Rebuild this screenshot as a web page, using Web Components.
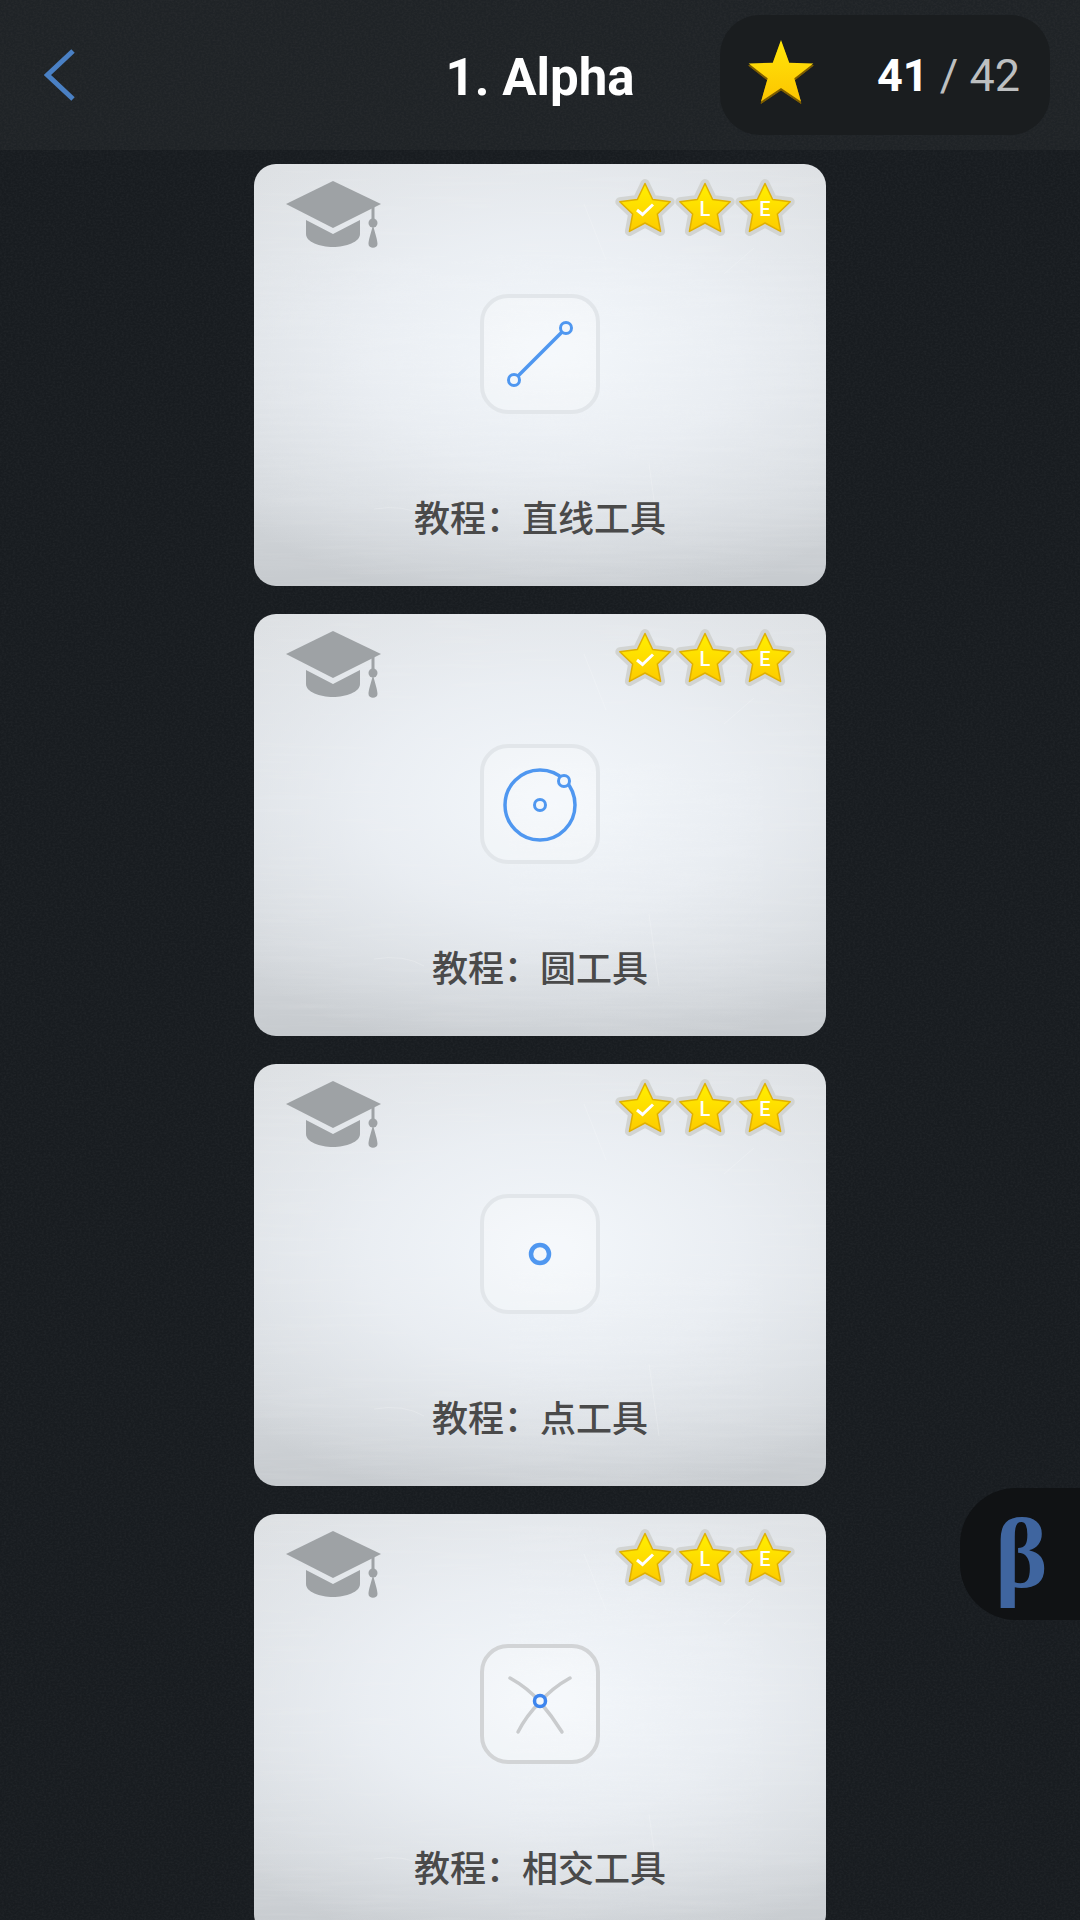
<!DOCTYPE html>
<html lang="zh">
<head>
<meta charset="utf-8">
<title>1. Alpha</title>
<style>
  html, body { margin: 0; padding: 0; background: #181c20; }
</style>
</head>
<body>
<euclid-screen>
  <level-header slot="header" title-text="1. Alpha" stars="41" total="42"></level-header>
  <tutorial-card tool="line">教程：直线工具</tutorial-card>
  <tutorial-card tool="circle">教程：圆工具</tutorial-card>
  <tutorial-card tool="point">教程：点工具</tutorial-card>
  <tutorial-card tool="intersect">教程：相交工具</tutorial-card>
</euclid-screen>

<script>
// Builds the points of a five pointed star around (cx, cy)
function starPoints(cx, cy, outer, inner) {
  const pts = [];
  for (let i = 0; i < 10; i++) {
    const r = i % 2 ? inner : outer;
    const a = -Math.PI / 2 + i * Math.PI / 5;
    pts.push((cx + r * Math.cos(a)).toFixed(2) + ',' + (cy + r * Math.sin(a)).toFixed(2));
  }
  return pts.join(' ');
}

/** Full screen: chalkboard background, header slot, list of cards, beta tab */
class EuclidScreen extends HTMLElement {
  constructor() {
    super();
    this.attachShadow({ mode: 'open' });
    this.shadowRoot.innerHTML = `
      <style>
        :host {
          display: block;
          position: relative;
          width: 1080px;
          height: 1920px;
          overflow: hidden;
          background: #181c20;
          font-family: Roboto, "Noto Sans CJK SC", sans-serif;
        }
        .grain {
          position: absolute;
          inset: 0;
          width: 100%;
          height: 100%;
          opacity: .05;
        }
        .list {
          position: relative;
          display: flex;
          flex-direction: column;
          align-items: center;
          gap: 28px;
          padding-top: 14px;
        }
      </style>
      <svg class="grain" aria-hidden="true">
        <filter id="chalk"><feTurbulence type="fractalNoise" baseFrequency=".45 .55" numOctaves="2" seed="4"/><feColorMatrix values="0 0 0 0 1  0 0 0 0 1  0 0 0 0 1  1.2 0 0 0 -.4"/></filter>
        <rect width="100%" height="100%" filter="url(#chalk)"/>
      </svg>
      <slot name="header"></slot>
      <div class="list"><slot></slot></div>
      <beta-tab></beta-tab>
    `;
  }
}

/** Top bar with back chevron, level title and star score */
class LevelHeader extends HTMLElement {
  constructor() {
    super();
    this.attachShadow({ mode: 'open' });
  }

  connectedCallback() {
    this.shadowRoot.innerHTML = `
      <style>
        :host {
          display: grid;
          grid-template-columns: 1fr auto 1fr;
          align-items: center;
          position: relative;
          height: 150px;
          background: rgba(255, 255, 255, .03);
          color: #fff;
        }
        .back { margin-left: 44px; display: block; }
        h1 {
          margin: 4px 0 0;
          font: 700 51px Roboto, sans-serif;
          color: #fff;
        }
        .score {
          justify-self: end;
          margin-right: 30px;
          box-sizing: border-box;
          width: 330px;
          height: 120px;
          padding: 0 30px 0 28px;
          display: flex;
          align-items: center;
          justify-content: space-between;
          background: #1a1d1f;
          border-radius: 40px;
        }
        .score svg { display: block; margin-top: -9px; }
        .count { font: 400 45px Roboto, sans-serif; color: #bdbfc0; white-space: nowrap; }
        .count b { font-weight: 700; color: #fff; }
      </style>
      <svg class="back" width="32" height="54" viewBox="0 0 32 54">
        <path d="M29 3 L3.5 27 L29 51" fill="none" stroke="#4a80c4" stroke-width="5"/>
      </svg>
      <h1>${this.getAttribute('title-text')}</h1>
      <div class="score">
        <svg width="66" height="68" viewBox="0 0 66 68">
          <defs>
            <linearGradient id="hs" x1="0" y1="0" x2="0" y2="1">
              <stop offset="0" stop-color="#ffe60a"/><stop offset="1" stop-color="#fcc400"/>
            </linearGradient>
          </defs>
          <polygon points="${starPoints(33, 37, 34, 14)}" transform="translate(0 2)" fill="#7f5e00" stroke="#7f5e00" stroke-width="1" stroke-linejoin="round"/>
          <polygon points="${starPoints(33, 37, 34, 14)}" fill="url(#hs)"/>
        </svg>
        <span class="count"><b>${this.getAttribute('stars')}</b> / ${this.getAttribute('total')}</span>
      </div>
    `;
  }
}

/** Small yellow star with a mark on it */
class StarBadge extends HTMLElement {
  constructor() {
    super();
    this.attachShadow({ mode: 'open' });
    const pts = starPoints(30, 32, 26.5, 13);
    this.shadowRoot.innerHTML = `
      <style>
        :host {
          display: block;
          position: relative;
          width: 60px;
          height: 60px;
        }
        svg { display: block; }
        .mark {
          position: absolute;
          left: 0;
          right: 0;
          top: 19px;
          text-align: center;
          font: 500 20px/24px Roboto, sans-serif;
          color: #fff;
        }
      </style>
      <svg width="60" height="60" viewBox="0 0 60 60">
        <defs>
          <linearGradient id="g" x1="0" y1="0" x2="0" y2="1">
            <stop offset="0" stop-color="#fff000"/><stop offset="1" stop-color="#fdcb00"/>
          </linearGradient>
        </defs>
        <polygon points="${pts}" fill="#d2d4d2" stroke="#d2d4d2" stroke-width="9" stroke-linejoin="round"/>
        <polygon points="${pts}" fill="url(#g)" stroke="#e0b000" stroke-width="1.5" stroke-linejoin="round"/>
      </svg>
      <div class="mark"><slot></slot></div>
    `;
  }
}

/** Rounded tile with the drawing of a geometry tool */
class ToolIcon extends HTMLElement {
  constructor() {
    super();
    this.attachShadow({ mode: 'open' });
  }

  connectedCallback() {
    const blue = 'fill="#f3f7fb" stroke="#4f97f0" stroke-width="3"';
    const drawings = {
      line: `<line x1="34" y1="86" x2="86" y2="34" stroke="#4f97f0" stroke-width="3.5"/>
             <circle cx="34" cy="86" r="5.5" ${blue}/><circle cx="86" cy="34" r="5.5" ${blue}/>`,
      circle: `<circle cx="60" cy="61" r="35" fill="none" stroke="#4f97f0" stroke-width="3.5"/>
               <circle cx="60" cy="61" r="5.5" ${blue}/><circle cx="84" cy="37" r="5.5" ${blue}/>`,
      point: `<circle cx="60" cy="60" r="9" fill="#f3f7fb" stroke="#4f97f0" stroke-width="4.5"/>`,
      intersect: `<g fill="none" stroke="#c9cbcd" stroke-width="3.5" stroke-linecap="round">
                    <path d="M30 34 Q48 44 60 58 Q72 44 90 34"/>
                    <path d="M38 88 Q46 72 60 58 Q72 72 82 88"/>
                  </g>
                  <circle cx="60" cy="57" r="5.5" fill="#f3f7fb" stroke="#3d85ee" stroke-width="3.5"/>`
    };
    const tool = this.getAttribute('tool');
    const border = tool === 'intersect' ? '#d2d4d6' : '#e2e6ea';
    this.shadowRoot.innerHTML = `
      <style>
        :host {
          display: block;
          box-sizing: border-box;
          width: 120px;
          height: 120px;
          border: 4px solid ${border};
          border-radius: 28px;
          background: rgba(255, 255, 255, .22);
        }
        svg { display: block; margin: -4px; }
      </style>
      <svg width="120" height="120" viewBox="0 0 120 120">${drawings[tool]}</svg>
    `;
  }
}

/** One tutorial in the level list */
class TutorialCard extends HTMLElement {
  constructor() {
    super();
    this.attachShadow({ mode: 'open' });
  }

  connectedCallback() {
    this.shadowRoot.innerHTML = `
      <style>
        :host {
          display: flex;
          flex-direction: column;
          align-items: center;
          position: relative;
          flex: none;
          box-sizing: border-box;
          width: 572px;
          height: 422px;
          padding-top: 14px;
          border-radius: 22px;
          background:
            radial-gradient(ellipse 72% 62% at 52% 44%, rgba(243, 247, 251, 1) 0%, rgba(238, 242, 247, .8) 45%, rgba(222, 226, 231, 0) 100%),
            linear-gradient(180deg, #dde0e3 0%, #d9dde1 45%, #d2d6da 80%, #c6cace 100%);
          overflow: hidden;
        }
        .grain {
          position: absolute;
          inset: 0;
          width: 100%;
          height: 100%;
          opacity: .1;
          pointer-events: none;
        }
        .scratch {
          position: absolute;
          inset: 0;
          width: 100%;
          height: 100%;
          pointer-events: none;
        }
        .top {
          position: relative;
          align-self: stretch;
          display: flex;
          justify-content: space-between;
          align-items: flex-start;
          padding: 0 31px 0 30px;
          height: 60px;
        }
        .stars { display: flex; }
        .cap { display: block; }
        tool-icon { margin-top: 56px; position: relative; }
        .name {
          position: relative;
          margin-top: 77px;
          font: 500 36px/50px "Noto Sans CJK SC", sans-serif;
          color: #4a4a4a;
          white-space: nowrap;
        }
        .check { display: block; margin: 3px auto 0; }
      </style>
      <svg class="grain" aria-hidden="true">
        <filter id="f"><feTurbulence type="fractalNoise" baseFrequency=".012 .22" numOctaves="3" seed="${this.getAttribute('tool').length}"/><feColorMatrix values="0 0 0 0 1  0 0 0 0 1  0 0 0 0 1  1.4 0 0 0 -.5"/></filter>
        <rect width="100%" height="100%" filter="url(#f)"/>
      </svg>
      <svg class="scratch" viewBox="0 0 572 422" aria-hidden="true" fill="none" stroke="#fff" stroke-opacity=".2" stroke-width="1">
        <path d="M330 40 L352 96"/>
        <path d="M395 300 L405 372"/>
        <path d="M470 110 L500 84"/>
        <path d="M120 345 Q150 340 170 352"/>
      </svg>
      <div class="top">
        <svg class="cap" width="100" height="76" viewBox="0 0 100 76" fill="#9ea2a5">
          <polygon points="2,26 49,3 97,26 49,50"/>
          <path d="M22 42 L49 56 L76 42 V56 C76 64 62 69 49 69 C36 69 22 64 22 56 Z"/>
          <rect x="87.5" y="26" width="3" height="18"/>
          <circle cx="89" cy="45" r="4.5"/>
          <path d="M89 47 C91 55 93.5 62 93.5 66 C93.5 71 84.5 71 84.5 66 C84.5 62 87 55 89 47 Z"/>
        </svg>
        <div class="stars">
          <star-badge><svg class="check" width="22" height="18" viewBox="0 0 22 18"><path d="M3 10 L8.5 14.5 L19 4.5" fill="none" stroke="#fff" stroke-width="3"/></svg></star-badge>
          <star-badge>L</star-badge>
          <star-badge>E</star-badge>
        </div>
      </div>
      <tool-icon tool="${this.getAttribute('tool')}"></tool-icon>
      <div class="name"><slot></slot></div>
    `;
  }
}

/** Beta tab stuck to the right edge */
class BetaTab extends HTMLElement {
  constructor() {
    super();
    this.attachShadow({ mode: 'open' });
    this.shadowRoot.innerHTML = `
      <style>
        :host {
          position: absolute;
          right: 0;
          top: 1488px;
          box-sizing: border-box;
          width: 120px;
          height: 132px;
          padding-left: 35px;
          display: flex;
          align-items: center;
          background: #101214;
          border-radius: 56px 0 0 56px;
          font: 700 100px/132px "Liberation Serif", serif;
          color: #3f659f;
        }
      </style>
      β
    `;
  }
}

customElements.define('euclid-screen', EuclidScreen);
customElements.define('level-header', LevelHeader);
customElements.define('star-badge', StarBadge);
customElements.define('tool-icon', ToolIcon);
customElements.define('tutorial-card', TutorialCard);
customElements.define('beta-tab', BetaTab);
</script>
</body>
</html>
